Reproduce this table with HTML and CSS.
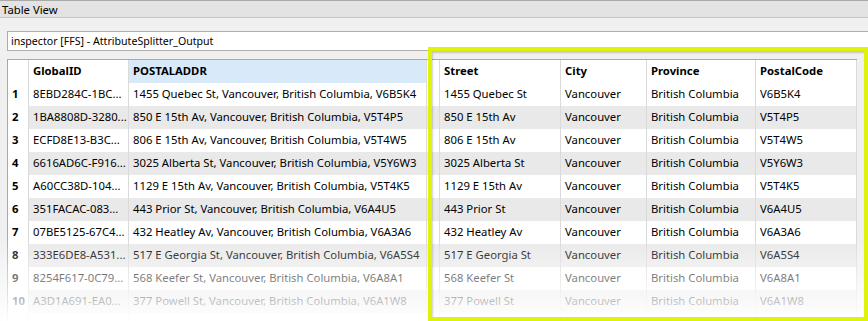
FILE: index.html
```html
<!DOCTYPE html>
<html>
<head>
<meta charset="utf-8">
<link rel="stylesheet" href="styles.css">
</head>
<body>
<div class="page">
  <div class="titlebar">Table View</div>
  <div class="panel">
    <div class="source">inspector [FFS] - AttributeSplitter_Output</div>
    <div class="grid">
      <div class="row head">
        <div class="c num"></div>
        <div class="c">GlobalID</div>
        <div class="c sel">POSTALADDR</div>
        <div class="c gap"></div>
        <div class="c">Street</div>
        <div class="c">City</div>
        <div class="c">Province</div>
        <div class="c">PostalCode</div>
      </div>
      <div class="row">
        <div class="c num">1</div><div class="c">8EBD284C-1BC...</div><div class="c">1455 Quebec St, Vancouver, British Columbia, V6B5K4</div><div class="c gap"></div><div class="c">1455 Quebec St</div><div class="c">Vancouver</div><div class="c">British Columbia</div><div class="c">V6B5K4</div>
      </div>
      <div class="row">
        <div class="c num">2</div><div class="c">1BA8808D-3280...</div><div class="c">850 E 15th Av, Vancouver, British Columbia, V5T4P5</div><div class="c gap"></div><div class="c">850 E 15th Av</div><div class="c">Vancouver</div><div class="c">British Columbia</div><div class="c">V5T4P5</div>
      </div>
      <div class="row">
        <div class="c num">3</div><div class="c">ECFD8E13-B3C...</div><div class="c">806 E 15th Av, Vancouver, British Columbia, V5T4W5</div><div class="c gap"></div><div class="c">806 E 15th Av</div><div class="c">Vancouver</div><div class="c">British Columbia</div><div class="c">V5T4W5</div>
      </div>
      <div class="row">
        <div class="c num">4</div><div class="c">6616AD6C-F916...</div><div class="c">3025 Alberta St, Vancouver, British Columbia, V5Y6W3</div><div class="c gap"></div><div class="c">3025 Alberta St</div><div class="c">Vancouver</div><div class="c">British Columbia</div><div class="c">V5Y6W3</div>
      </div>
      <div class="row">
        <div class="c num">5</div><div class="c">A60CC38D-104...</div><div class="c">1129 E 15th Av, Vancouver, British Columbia, V5T4K5</div><div class="c gap"></div><div class="c">1129 E 15th Av</div><div class="c">Vancouver</div><div class="c">British Columbia</div><div class="c">V5T4K5</div>
      </div>
      <div class="row">
        <div class="c num">6</div><div class="c">351FACAC-083...</div><div class="c">443 Prior St, Vancouver, British Columbia, V6A4U5</div><div class="c gap"></div><div class="c">443 Prior St</div><div class="c">Vancouver</div><div class="c">British Columbia</div><div class="c">V6A4U5</div>
      </div>
      <div class="row">
        <div class="c num">7</div><div class="c">07BE5125-67C4...</div><div class="c">432 Heatley Av, Vancouver, British Columbia, V6A3A6</div><div class="c gap"></div><div class="c">432 Heatley Av</div><div class="c">Vancouver</div><div class="c">British Columbia</div><div class="c">V6A3A6</div>
      </div>
      <div class="row">
        <div class="c num">8</div><div class="c">333E6DE8-A531...</div><div class="c">517 E Georgia St, Vancouver, British Columbia, V6A5S4</div><div class="c gap"></div><div class="c">517 E Georgia St</div><div class="c">Vancouver</div><div class="c">British Columbia</div><div class="c">V6A5S4</div>
      </div>
      <div class="row">
        <div class="c num">9</div><div class="c">8254F617-0C79...</div><div class="c">568 Keefer St, Vancouver, British Columbia, V6A8A1</div><div class="c gap"></div><div class="c">568 Keefer St</div><div class="c">Vancouver</div><div class="c">British Columbia</div><div class="c">V6A8A1</div>
      </div>
      <div class="row">
        <div class="c num">10</div><div class="c">A3D1A691-EA0...</div><div class="c">377 Powell St, Vancouver, British Columbia, V6A1W8</div><div class="c gap"></div><div class="c">377 Powell St</div><div class="c">Vancouver</div><div class="c">British Columbia</div><div class="c">V6A1W8</div>
      </div>
      <div class="row">
        <div class="c num"></div><div class="c"></div><div class="c"></div><div class="c gap"></div><div class="c"></div><div class="c"></div><div class="c"></div><div class="c"></div>
      </div>
    </div>
  </div>
  <div class="fade"></div>
  <div class="highlight"></div>
</div>
</body>
</html>
```

FILE: styles.css
```css
html, body {
  margin: 0;
  padding: 0;
}
body {
  background: #f0f0f0;
  font-family: "Noto Sans", "Open Sans", sans-serif;
  font-size: 11.3px;
  color: #000;
}
.page {
  position: relative;
  width: 868px;
  height: 321px;
  overflow: hidden;
}
.titlebar {
  border-top: 1px solid #a9a9a9;
  border-bottom: 1px solid #c6c6c6;
  background: #e3e3e3;
  height: 16px;
  line-height: 17px;
  padding-left: 2px;
  font-size: 11.3px;
}
.panel {
  padding: 13px 0 0 7px;
}
.source {
  box-sizing: border-box;
  height: 20px;
  line-height: 19px;
  border: 1px solid #adadad;
  border-right: none;
  background: #fff;
  padding-left: 3px;
  margin-bottom: 8px;
  font-size: 10.6px;
}
.grid {
  width: 850px;
  border-top: 1px solid #a9a9a9;
  border-left: 1px solid #a9a9a9;
  box-sizing: border-box;
}
.row {
  display: grid;
  grid-template-columns: 21px 100px 298px 13px 121px 86px 109px 101px;
  height: 23px;
  background: #fff;
}
.row:nth-child(odd) {
  background: #e9e9e9;
}
.row.head {
  background: #fff;
  font-weight: bold;
}
.c {
  box-sizing: border-box;
  border-right: 1px solid #dadada;
  padding-left: 4px;
  line-height: 22px;
  white-space: nowrap;
  overflow: hidden;
}
.c.num {
  background: #fff;
  font-weight: bold;
  padding-left: 4px;
}
.c.sel {
  background: #d8eaf9;
}
.fade {
  position: absolute;
  left: 0;
  top: 236px;
  width: 868px;
  height: 85px;
  background: linear-gradient(to bottom, rgba(255,255,255,0), rgba(255,255,255,0.97));
}
.highlight {
  position: absolute;
  left: 428px;
  top: 47px;
  width: 440px;
  height: 274px;
  box-sizing: border-box;
  border: 4px solid #def20a;
  box-shadow: inset 1px 2px 2px rgba(0,0,0,0.18);
}
```
